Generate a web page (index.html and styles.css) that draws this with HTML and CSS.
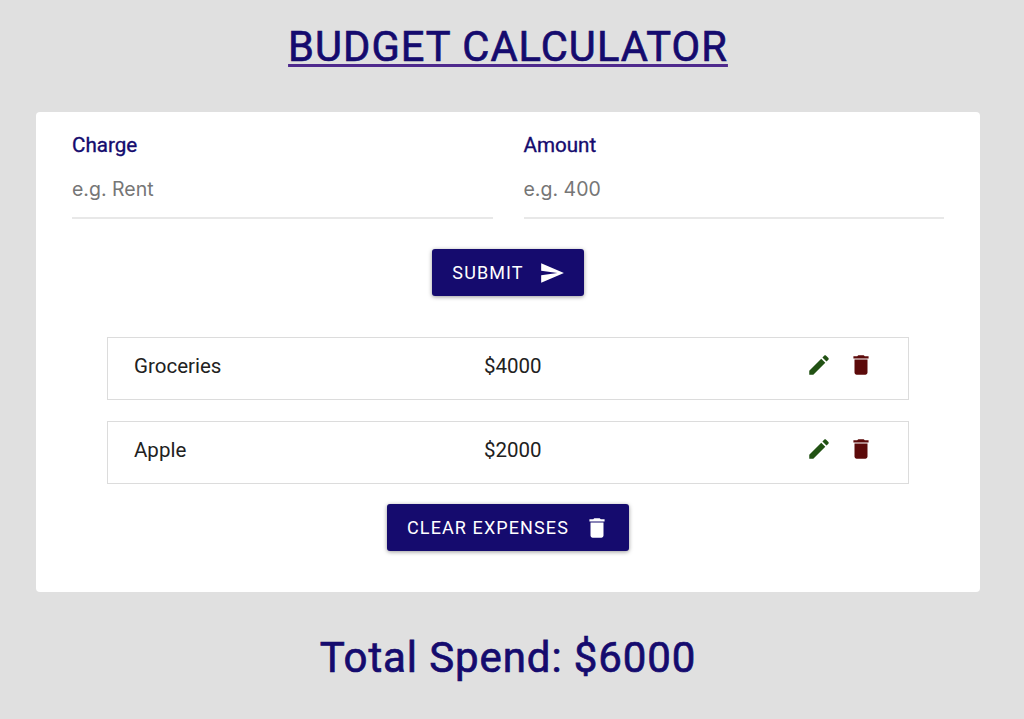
FILE: index.html
```html
<!DOCTYPE html>
<html lang="en">
<head>
<meta charset="utf-8">
<title>Budget Calculator</title>
<link rel="stylesheet" href="styles.css">
</head>
<body>
<main class="app">
  <h1 class="title">BUDGET CALCULATOR</h1>
  <section class="card">
    <form class="form">
      <div class="fields">
        <label class="field">
          <span class="field-label">Charge</span>
          <input class="field-input" type="text" placeholder="e.g. Rent">
        </label>
        <label class="field">
          <span class="field-label">Amount</span>
          <input class="field-input" type="text" placeholder="e.g. 400">
        </label>
      </div>
      <button class="btn btn-submit" type="button">SUBMIT
        <svg class="btn-icon btn-icon-send" viewBox="0 0 24 24"><path d="M2.01 21L23 12 2.01 3 2 10l15 2-15 2z"/></svg>
      </button>
    </form>
    <ul class="list">
      <li class="item">
        <span class="item-name">Groceries</span>
        <span class="item-amount">$4000</span>
        <span class="item-actions">
          <svg class="icon icon-edit" viewBox="0 0 24 24"><path d="M3 17.25V21h3.75L17.81 9.94l-3.75-3.75L3 17.25zM20.71 7.04c.39-.39.39-1.02 0-1.41l-2.34-2.34c-.39-.39-1.02-.39-1.41 0l-1.83 1.83 3.75 3.75 1.83-1.83z"/></svg>
          <svg class="icon icon-delete" viewBox="0 0 24 24"><path d="M6 19c0 1.1.9 2 2 2h8c1.1 0 2-.9 2-2V7H6v12zM19 4h-3.5l-1-1h-5l-1 1H5v2h14V4z"/></svg>
        </span>
      </li>
      <li class="item">
        <span class="item-name">Apple</span>
        <span class="item-amount">$2000</span>
        <span class="item-actions">
          <svg class="icon icon-edit" viewBox="0 0 24 24"><path d="M3 17.25V21h3.75L17.81 9.94l-3.75-3.75L3 17.25zM20.71 7.04c.39-.39.39-1.02 0-1.41l-2.34-2.34c-.39-.39-1.02-.39-1.41 0l-1.83 1.83 3.75 3.75 1.83-1.83z"/></svg>
          <svg class="icon icon-delete" viewBox="0 0 24 24"><path d="M6 19c0 1.1.9 2 2 2h8c1.1 0 2-.9 2-2V7H6v12zM19 4h-3.5l-1-1h-5l-1 1H5v2h14V4z"/></svg>
        </span>
      </li>
    </ul>
    <div class="clear-row">
      <button class="btn btn-clear" type="button">CLEAR EXPENSES
        <svg class="btn-icon" viewBox="0 0 24 24"><path d="M6 19c0 1.1.9 2 2 2h8c1.1 0 2-.9 2-2V7H6v12zM19 4h-3.5l-1-1h-5l-1 1H5v2h14V4z"/></svg>
      </button>
    </div>
  </section>
  <h2 class="total">Total Spend: $6000</h2>
</main>
</body>
</html>
```
FILE: styles.css
```css
* { box-sizing: border-box; }
html, body { margin: 0; height: 100%; }
body {
  background: #e0e0e0;
  font-family: Roboto, "Liberation Sans", sans-serif;
  color: #212121;
  overflow: hidden;
}
.app {
  width: 1016px;
  padding: 0 36px;
}
.title {
  margin: 0;
  height: 112px;
  padding-top: 22px;
  text-align: center;
  font-size: 41.6px;
  line-height: 50px;
  font-weight: 400;
  letter-spacing: 1.05px;
  color: #150b6e;
  -webkit-text-stroke: 0.7px #150b6e;
  text-decoration: underline;
  text-decoration-color: #4f2a8e;
  text-decoration-thickness: 3px;
  text-decoration-skip-ink: none;
  text-underline-offset: 3px;
}
.card {
  height: 480px;
  background: #fff;
  border-radius: 4px;
  padding: 22px 36px 0;
}
.form {
  display: flex;
  flex-direction: column;
  align-items: center;
}
.fields {
  display: flex;
  gap: 31px;
  width: 100%;
}
.field {
  flex: 1;
  display: flex;
  flex-direction: column;
}
.field-label {
  font-size: 20.6px;
  line-height: 22px;
  font-weight: 400;
  color: #150b6e;
  -webkit-text-stroke: 0.35px #150b6e;
}
.field-input {
  height: 63px;
  padding: 4px 0 0;
  border: 0;
  border-bottom: 2px solid #e8e8e8;
  outline: 0;
  background: transparent;
  font-family: Inter, Roboto, sans-serif;
  font-size: 19.5px;
  color: #212121;
}
.field-input::placeholder { color: #767676; opacity: 1; }
.btn {
  display: inline-flex;
  align-items: center;
  height: 47px;
  padding: 0 19px 0 20px;
  border: 0;
  border-radius: 3px;
  background: #150b6e;
  color: #fff;
  font-family: inherit;
  font-size: 18px;
  font-weight: 400;
  letter-spacing: 1.1px;
  box-shadow: 0 1px 4px rgba(0, 0, 0, 0.4);
}
.btn-submit { margin-top: 30px; }
.btn-icon {
  width: 26px;
  height: 26px;
  margin-left: 15px;
  fill: #fff;
}
.list {
  list-style: none;
  width: 802px;
  margin: 41px auto 0;
  padding: 0;
}
.item {
  display: grid;
  grid-template-columns: 350px 1fr auto;
  align-items: center;
  height: 63px;
  padding: 0 26px 5px;
  border: 1px solid #dcdcdc;
  font-size: 20.5px;
  color: #212121;
}
.item + .item { margin-top: 20.5px; }
.item-actions {
  display: flex;
  gap: 16px;
  margin-top: -2px;
  margin-right: 8px;
}
.icon { width: 26px; height: 26px; }
.icon-edit { fill: #225214; }
.icon-delete { fill: #5c0a0a; }
.clear-row {
  display: flex;
  justify-content: center;
  margin-top: 20.5px;
}
.total {
  margin: 37px 0 0;
  text-align: center;
  font-size: 42px;
  line-height: 58px;
  font-weight: 400;
  letter-spacing: 0.9px;
  color: #150b6e;
  -webkit-text-stroke: 0.7px #150b6e;
}
```
